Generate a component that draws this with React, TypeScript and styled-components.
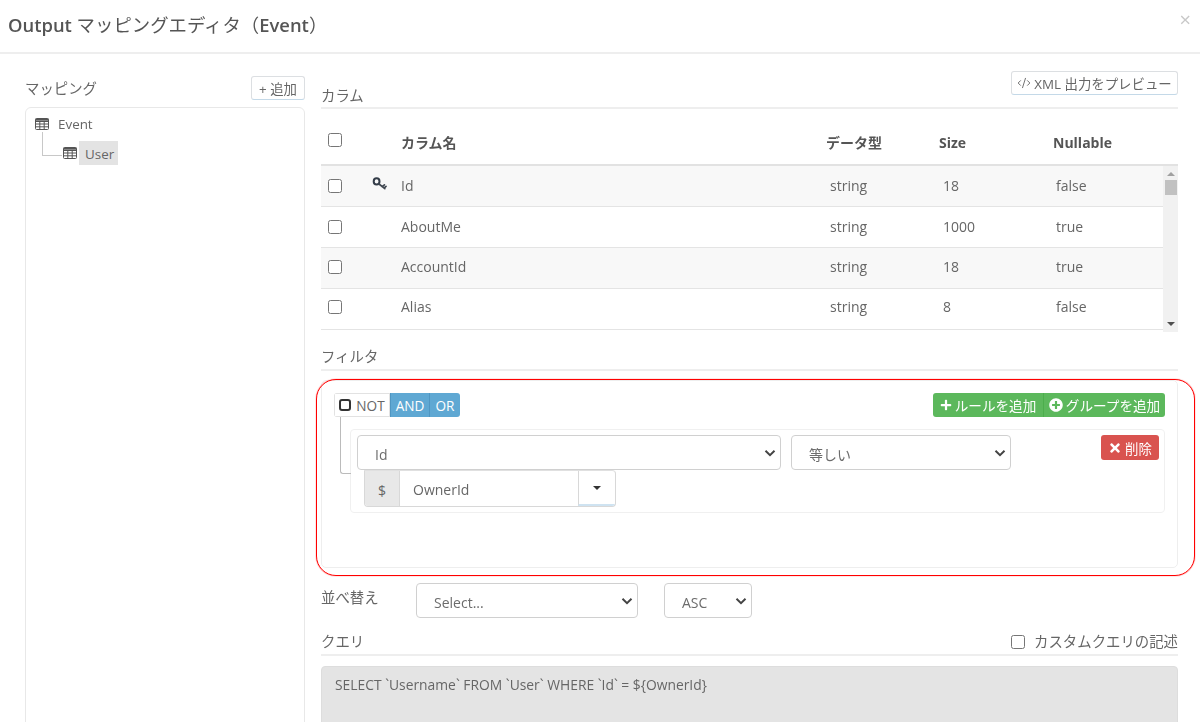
import React from "react";
import styled, { createGlobalStyle } from "styled-components";
import { CodeXml } from "lucide-react";
import { FaPlus, FaPlusCircle, FaTimes } from "react-icons/fa";

const chevron =
  "url(\"data:image/svg+xml,%3Csvg xmlns='http://www.w3.org/2000/svg' viewBox='0 0 14 14'%3E%3Cpath d='M2.5 4.8L7 9.2L11.5 4.8' fill='none' stroke='%23444' stroke-width='2'/%3E%3C/svg%3E\")";

const Global = createGlobalStyle`
  html, body { margin: 0; padding: 0; background: #fff; }
  * { box-sizing: border-box; }
  body {
    font-family: "Open Sans", "Noto Sans CJK JP", sans-serif;
    font-size: 14.4px;
    color: #666;
  }
`;

const Page = styled.div`
  width: 1200px;
  height: 722px;
  overflow: hidden;
  filter: blur(0.35px);
`;

const Header = styled.header`
  height: 54px;
  display: flex;
  justify-content: space-between;
  padding: 11px 8px 0;
  border-bottom: 2px solid #eeeeee;
`;

const Title = styled.h1`
  margin: 0;
  font-size: 18.4px;
  line-height: 28px;
  font-weight: 400;
  color: #555;
`;

const Latin = styled.span`
  font-weight: 600;
`;

const Close = styled.span`
  margin-top: -1px;
  margin-right: 1px;
  font-size: 20px;
  line-height: 20px;
  color: #c8c8c8;
`;

const Content = styled.div`
  display: flex;
  gap: 16px;
  padding-left: 25px;
`;

const LeftColumn = styled.aside`
  width: 280px;
  padding-top: 22px;
`;

const LeftHead = styled.div`
  display: flex;
  justify-content: space-between;
  align-items: center;
  height: 24px;
  margin-bottom: 7px;
`;

const LeftTitle = styled.span`
  margin-bottom: 2px;
`;

const OutlineButton = styled.button`
  height: 24px;
  padding: 0 7px 1px;
  display: inline-flex;
  align-items: center;
  gap: 4px;
  white-space: nowrap;
  font: inherit;
  font-size: 13.4px;
  color: #666;
  background: #fff;
  border: 1px solid #dcdfe2;
  border-bottom-color: #c4d9e8;
  border-radius: 3px;
`;

const TreePanel = styled.div`
  height: 640px;
  padding: 4px 9px;
  border: 1px solid #e8e8e8;
  border-radius: 6px;
`;

const TreeRow = styled.div<{ $child?: boolean }>`
  position: relative;
  display: flex;
  align-items: center;
  height: 24px;
  margin-top: ${(p) => (p.$child ? "5px" : "0")};
  margin-left: ${(p) => (p.$child ? "28px" : "0")};
  gap: ${(p) => (p.$child ? "2px" : "9px")};

  ${(p) =>
    p.$child &&
    `&::before {
      content: "";
      position: absolute;
      left: -21px;
      top: -9px;
      width: 19px;
      height: 23px;
      border-left: 1px solid #c8c8c8;
      border-bottom: 1px solid #c8c8c8;
    }`}
`;

const TreeLabel = styled.span<{ $active?: boolean }>`
  height: 24px;
  line-height: ${(p) => (p.$active ? "27px" : "24px")};
  padding: ${(p) => (p.$active ? "0 4px 0 6px" : "0")};
  font-size: 13.4px;
  background: ${(p) => (p.$active ? "#e3e3e3" : "transparent")};
`;

const RightColumn = styled.main`
  width: 857px;
  padding-top: 17px;
`;

const SectionHead = styled.div<{ $gap?: number }>`
  display: flex;
  justify-content: space-between;
  align-items: flex-end;
  margin-top: ${(p) => p.$gap ?? 0}px;
  padding-bottom: 2px;
  border-bottom: 2px solid #eeeeee;
`;

const SectionTitle = styled.span`
  line-height: 20px;
`;

const ColumnsTitle = styled(SectionTitle)`
  margin-bottom: -1px;
`;

const PreviewButton = styled(OutlineButton)`
  align-self: flex-start;
  margin-bottom: 10px;
  padding: 0;
  width: 167px;
  justify-content: center;
  gap: 3px;
  font-size: 13.4px;
`;

const ColumnsHead = styled.div`
  display: grid;
  grid-template-columns: 44px 29px 425px 113px 114px 1fr;
  align-items: center;
  height: 57px;
  padding: 11px 0 0 7px;
  border-bottom: 2px solid #e2e2e2;
  font-weight: 700;
  font-size: 14px;
  color: #555;
`;

const TableBody = styled.div`
  display: flex;
  height: 166px;
`;

const Rows = styled.div`
  flex: 1;
`;

const Row = styled.div<{ $odd: boolean; $lift: number }>`
  display: grid;
  grid-template-columns: 44px 29px 425px 113px 113px 1fr;
  align-items: center;
  height: 41px;
  padding: 0 0 ${(p) => p.$lift}px 7px;
  font-size: 14px;
  background: ${(p) => (p.$odd ? "#f8f8f8" : "#fff")};
  border-bottom: 1px solid #e4e4e4;
`;

const ValueCell = styled.span`
  padding-left: 4px;
`;

const Check = styled.input.attrs({ type: "checkbox" })`
  width: 14px;
  height: 14px;
  margin: 0;
`;

const HeadCheck = styled(Check)`
  margin-bottom: 4px;
`;

const ScrollTrack = styled.div`
  width: 15px;
  background: #f1f1f1;
  display: flex;
  flex-direction: column;
  align-items: center;
  justify-content: space-between;
  padding: 6px 0 6px;
`;

const ArrowUp = styled.span`
  width: 0;
  height: 0;
  border: 4px solid transparent;
  border-top: 0;
  border-bottom-color: #a0a0a0;
`;

const ArrowDown = styled.span`
  width: 0;
  height: 0;
  border: 4px solid transparent;
  border-bottom: 0;
  border-top-color: #505050;
`;

const Thumb = styled.span`
  width: 12px;
  height: 15px;
  margin-top: 4px;
  margin-bottom: auto;
  background: #c1c1c1;
`;

const QueryPanel = styled.section`
  position: relative;
  height: 188px;
  margin-top: 9px;
  padding: 12px 12px 0 12px;
  border: 1px solid #eeeeee;
  border-radius: 5px;
`;

const Highlight = styled.div`
  position: absolute;
  top: -2px;
  left: -6px;
  right: -18px;
  bottom: -9px;
  border: 1px solid #f00;
  box-shadow: 0 0 1px #f00;
  border-radius: 20px;
  pointer-events: none;
`;

const GroupHead = styled.div`
  display: flex;
  justify-content: space-between;
  height: 24px;
  margin-bottom: 12px;
`;

const ButtonGroup = styled.div`
  display: flex;
  border-radius: 3px;
  overflow: hidden;
`;

const Toggle = styled.span<{ $on?: boolean; $w: number }>`
  width: ${(p) => p.$w}px;
  display: flex;
  align-items: center;
  justify-content: center;
  gap: 5px;
  font-size: 13.6px;
  color: ${(p) => (p.$on ? "#fff" : "#666")};
  background: ${(p) => (p.$on ? "#5fa8d3" : "#fff")};
  border: 1px solid ${(p) => (p.$on ? "#4f96c2" : "#e2e2e2")};
  border-width: ${(p) => (p.$on ? "0 0 0 1px" : "1px")};
`;

const NotBox = styled.span`
  width: 12px;
  height: 12px;
  border: 2.5px solid #333;
  border-radius: 3px;
`;

const GreenButton = styled.span<{ $w: number }>`
  width: ${(p) => p.$w}px;
  display: flex;
  align-items: center;
  justify-content: center;
  gap: 3px;
  font-size: 13.6px;
  color: #fff;
  background: #5cb85c;
  & + & {
    border-left: 1px solid #4cae4c;
  }
`;

const Rule = styled.div`
  position: relative;
  height: 84px;
  margin-left: 16px;
  padding: 5px 5px 0 6px;
  border: 1px solid #f0f0f0;
  border-radius: 4px;

  &::before {
    content: "";
    position: absolute;
    left: -11px;
    top: -13px;
    width: 10px;
    height: 56px;
    border-left: 1px solid #bbb;
    border-bottom: 1px solid #bbb;
    border-radius: 0 0 0 3px;
  }
`;

const RuleRow = styled.div`
  display: flex;
  gap: 10px;
  align-items: flex-start;
`;

const Select = styled.select<{ $w: number }>`
  appearance: none;
  width: ${(p) => p.$w}px;
  height: 35px;
  padding: 3px 17px 0;
  font: inherit;
  font-size: 14px;
  color: #6c6c6c;
  background: #fff ${chevron} no-repeat right 3px center / 14px 14px;
  border: 1px solid #d0d0d0;
  border-radius: 4px;
`;

const DeleteButton = styled.span`
  margin-left: auto;
  width: 58px;
  height: 25px;
  display: flex;
  align-items: center;
  justify-content: center;
  gap: 3px;
  font-size: 13.4px;
  color: #fff;
  background: #d9534f;
  border-radius: 3px;
`;

const InputGroup = styled.div`
  display: flex;
  width: 252px;
  height: 37px;
  margin-left: 7px;
  border: 1px solid #d8d8d8;
  border-top-color: #e0e0e0;
  border-radius: 0 4px 4px 4px;
  overflow: hidden;
`;

const Addon = styled.span`
  width: 35px;
  padding-top: 3px;
  display: flex;
  align-items: center;
  justify-content: center;
  font-size: 14px;
  background: #e8e8e8;
  border-right: 1px solid #d8d8d8;
`;

const TextInput = styled.input`
  flex: 1;
  min-width: 0;
  padding: 2px 13px 0;
  border: 0;
  outline: 0;
  font: inherit;
  font-size: 14px;
  color: #666;
`;

const CaretButton = styled.span`
  width: 37px;
  display: flex;
  align-items: center;
  justify-content: center;
  border-left: 1px solid #d8d8d8;
  border-bottom: 2px solid #cfe3f1;
`;

const Caret = styled.span`
  width: 0;
  height: 0;
  border: 4.5px solid transparent;
  border-bottom: 0;
  border-top-color: #333;
`;

const SortRow = styled.div`
  display: flex;
  align-items: flex-start;
  margin-top: 15px;
`;

const SortLabel = styled.span`
  width: 95px;
  line-height: 30px;
`;

const SortSelect = styled(Select)`
  & + & {
    margin-left: 26px;
  }
`;

const CustomLabel = styled.label`
  display: flex;
  align-items: center;
  gap: 9px;
  line-height: 20px;
`;

const QueryBox = styled.textarea`
  display: block;
  width: 100%;
  height: 130px;
  margin-top: 10px;
  padding: 8px 13px;
  resize: none;
  font: inherit;
  font-size: 13.85px;
  line-height: 20px;
  color: #666;
  background: #e4e4e4;
  border: 1px solid #dddddd;
  border-radius: 4px;
`;

const TableIcon = () => (
  <svg width="14" height="12" viewBox="0 0 14 12" fill="none" stroke="#555" strokeWidth="1">
    <rect x="0.5" y="0.5" width="13" height="11" rx="1" />
    <path d="M0.5 3.5H13.5M0.5 6H13.5M0.5 8.8H13.5M4.8 3.5V11.5M9.2 3.5V11.5" />
    <path d="M0.5 1.7H13.5" strokeWidth="2" />
  </svg>
);

const KeyIcon = () => (
  <svg width="15" height="14" viewBox="0 0 15 14" fill="none" strokeLinecap="round">
    <ellipse cx="4.6" cy="4.4" rx="2.9" ry="3.1" stroke="#333c48" strokeWidth="2" />
    <path d="M7 7L12.8 11.6M10.2 9.6L12.4 7.8M12.2 11L14 9.4" stroke="#3f4650" strokeWidth="1.7" />
  </svg>
);

const rows = [
  { name: "Id", size: "18", nullable: "false", key: true, lift: 1 },
  { name: "AboutMe", size: "1000", nullable: "true", lift: 1 },
  { name: "AccountId", size: "18", nullable: "true", lift: 3 },
  { name: "Alias", size: "8", nullable: "false", lift: 5 },
];

export default function App() {
  return (
    <Page>
      <Global />
      <Header>
        <Title>
          <Latin>Output</Latin> マッピングエディタ（<Latin>Event</Latin>）
        </Title>
        <Close>×</Close>
      </Header>
      <Content>
        <LeftColumn>
          <LeftHead>
            <LeftTitle>マッピング</LeftTitle>
            <OutlineButton>+ 追加</OutlineButton>
          </LeftHead>
          <TreePanel>
            <TreeRow>
              <TableIcon />
              <TreeLabel>Event</TreeLabel>
            </TreeRow>
            <TreeRow $child>
              <TableIcon />
              <TreeLabel $active>User</TreeLabel>
            </TreeRow>
          </TreePanel>
        </LeftColumn>
        <RightColumn>
          <SectionHead>
            <ColumnsTitle>カラム</ColumnsTitle>
            <PreviewButton>
              <CodeXml size={14} strokeWidth={1.6} />
              XML 出力をプレビュー
            </PreviewButton>
          </SectionHead>
          <ColumnsHead>
            <HeadCheck readOnly />
            <span />
            <span>カラム名</span>
            <span>データ型</span>
            <span>Size</span>
            <span>Nullable</span>
          </ColumnsHead>
          <TableBody>
            <Rows>
              {rows.map((r, i) => (
                <Row key={r.name} $odd={i % 2 === 0} $lift={r.lift}>
                  <Check readOnly />
                  <span>{r.key && <KeyIcon />}</span>
                  <span>{r.name}</span>
                  <ValueCell>string</ValueCell>
                  <ValueCell>{r.size}</ValueCell>
                  <ValueCell>{r.nullable}</ValueCell>
                </Row>
              ))}
            </Rows>
            <ScrollTrack>
              <ArrowUp />
              <Thumb />
              <ArrowDown />
            </ScrollTrack>
          </TableBody>

          <SectionHead $gap={15}>
            <SectionTitle>フィルタ</SectionTitle>
          </SectionHead>
          <QueryPanel>
            <Highlight />
            <GroupHead>
              <ButtonGroup>
                <Toggle $w={56}>
                  <NotBox />
                  NOT
                </Toggle>
                <Toggle $on $w={39}>AND</Toggle>
                <Toggle $on $w={31}>OR</Toggle>
              </ButtonGroup>
              <ButtonGroup>
                <GreenButton $w={110}>
                  <FaPlus size={12} />
                  ルールを追加
                </GreenButton>
                <GreenButton $w={122}>
                  <FaPlusCircle size={14} />
                  グループを追加
                </GreenButton>
              </ButtonGroup>
            </GroupHead>
            <Rule>
              <RuleRow>
                <Select $w={424} defaultValue="Id">
                  <option>Id</option>
                </Select>
                <Select $w={220} defaultValue="等しい">
                  <option>等しい</option>
                </Select>
                <DeleteButton>
                  <FaTimes size={14} />
                  削除
                </DeleteButton>
              </RuleRow>
              <InputGroup>
                <Addon>$</Addon>
                <TextInput defaultValue="OwnerId" />
                <CaretButton>
                  <Caret />
                </CaretButton>
              </InputGroup>
            </Rule>
          </QueryPanel>

          <SortRow>
            <SortLabel>並べ替え</SortLabel>
            <SortSelect $w={222} defaultValue="Select...">
              <option>Select...</option>
            </SortSelect>
            <SortSelect $w={88} defaultValue="ASC">
              <option>ASC</option>
            </SortSelect>
          </SortRow>

          <SectionHead $gap={14}>
            <SectionTitle>クエリ</SectionTitle>
            <CustomLabel>
              <Check readOnly />
              カスタムクエリの記述
            </CustomLabel>
          </SectionHead>
          <QueryBox readOnly value={"SELECT `Username` FROM `User` WHERE `Id` = ${OwnerId}"} />
        </RightColumn>
      </Content>
    </Page>
  );
}
